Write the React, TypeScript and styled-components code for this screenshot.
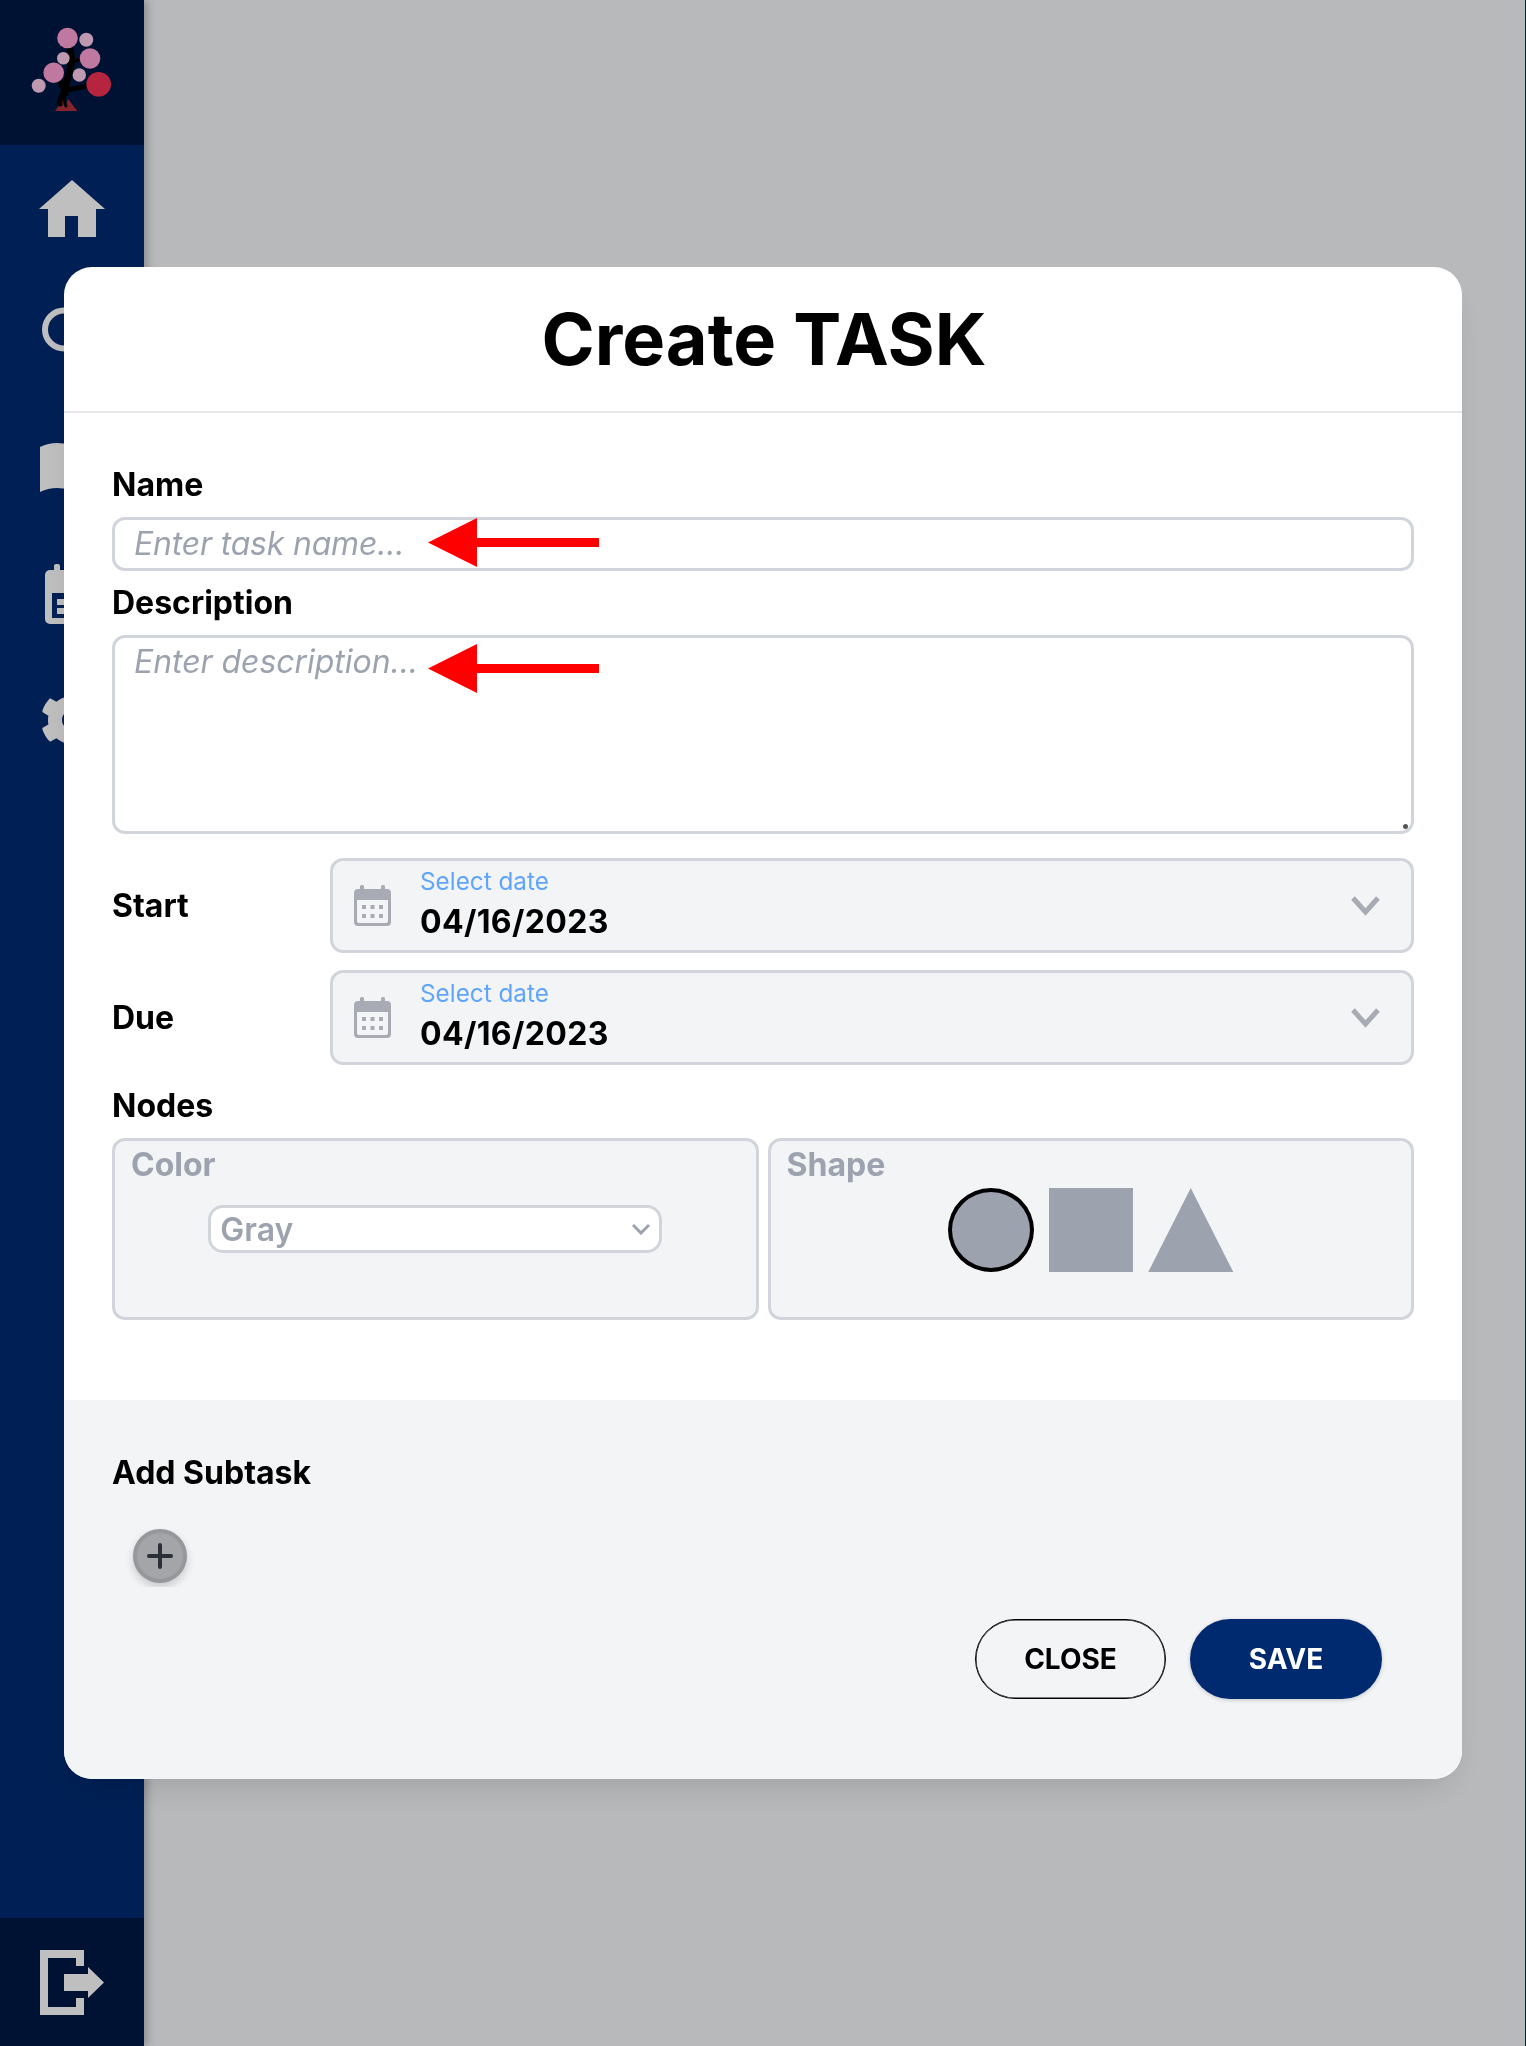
import styled, { createGlobalStyle } from 'styled-components'
import { FaCog } from 'react-icons/fa'

const GlobalStyle = createGlobalStyle`
  html, body {
    margin: 0;
    padding: 0;
    height: 100%;
    background: #f5f7f8;
    font-family: Inter, "Noto Sans", sans-serif;
  }
  * {
    box-sizing: border-box;
  }
`

const Page = styled.div`
  display: flex;
  height: 2046px;
  overflow: hidden;
  border-right: 1px solid #002a70;
`

const Sidebar = styled.aside`
  width: 144px;
  flex: none;
  display: flex;
  flex-direction: column;
  background: #002a70;
  box-shadow: 3px 0 8px rgba(0, 0, 0, 0.25);
`

const LogoCell = styled.div`
  height: 145px;
  background: #001944;
`

const Nav = styled.nav`
  flex: 1;
  display: flex;
  flex-direction: column;
  align-items: center;
  gap: 63.5px;
  padding-top: 31px;
  color: #fff;
`

const NavIcon = styled.svg`
  width: 64px;
  height: 64px;
  flex: none;
  overflow: visible;
  fill: currentColor;
`

const GearIcon = styled(FaCog)`
  flex: none;
  margin-top: 2px;
`

const LogoutCell = styled.div`
  height: 128px;
  display: flex;
  align-items: center;
  justify-content: center;
  background: #001944;
  color: #fff;
`

const Overlay = styled.div`
  position: fixed;
  inset: 0;
  display: flex;
  align-items: center;
  justify-content: center;
  background: rgba(0, 0, 0, 0.25);
`

const Modal = styled.div`
  width: 1398px;
  height: 1512px;
  display: flex;
  flex-direction: column;
  background: #fff;
  border-radius: 28px;
  overflow: hidden;
  box-shadow: 0 16px 40px -16px rgba(0, 0, 0, 0.18);
`

const ModalHeader = styled.header`
  height: 146px;
  flex: none;
  display: flex;
  align-items: center;
  justify-content: center;
  padding: 0 0 2px 2px;
  border-bottom: 2px solid #e5e7eb;
`

const Title = styled.h1`
  margin: 0;
  font-size: 72px;
  font-weight: 700;
  color: #000;
`

const ModalBody = styled.div`
  flex: 1;
  display: flex;
  flex-direction: column;
  padding: 48px 48px 0;
`

const Label = styled.label<{ $gap?: number }>`
  display: block;
  font-size: 32px;
  line-height: 48px;
  font-weight: 700;
  color: #000;
  margin-bottom: ${(p) => p.$gap ?? 8}px;
`

const FieldWrap = styled.div`
  position: relative;
`

const TextInput = styled.input`
  display: block;
  width: 100%;
  height: 54px;
  padding: 0 19px 1px;
  margin-bottom: 8px;
  border: 3px solid #d1d5db;
  border-radius: 13px;
  outline: none;
  font: italic 400 32px Inter, sans-serif;
  letter-spacing: -0.2px;
  &::placeholder {
    color: #9ca3af;
    opacity: 1;
  }
`

const TextArea = styled.textarea`
  display: block;
  width: 100%;
  height: 199px;
  padding: 0 19px;
  border: 3px solid #d1d5db;
  border-radius: 13px;
  outline: none;
  resize: none;
  font: italic 400 32px/48px Inter, sans-serif;
  letter-spacing: -0.05px;
  &::placeholder {
    color: #9ca3af;
    opacity: 1;
  }
`

const ResizeGrip = styled.span`
  position: absolute;
  right: 6px;
  bottom: 5px;
  width: 5px;
  height: 5px;
  border-radius: 50%;
  background: #555;
`

const RedArrow = styled.svg<{ $top: number }>`
  position: absolute;
  left: 316px;
  top: ${(p) => p.$top}px;
  width: 171px;
  height: 49px;
  fill: #ff0000;
`

const DateRows = styled.div`
  display: flex;
  flex-direction: column;
  gap: 17px;
  margin-top: 24px;
`

const DateRow = styled.div`
  display: grid;
  grid-template-columns: 218px 1fr;
  align-items: center;
`

const DateLabel = styled.span`
  font-size: 32px;
  font-weight: 700;
  color: #000;
`

const DateControl = styled.div`
  height: 95px;
  display: flex;
  align-items: center;
  gap: 29px;
  padding: 0 31px 0 21px;
  background: #f3f4f6;
  border: 3px solid #d1d5db;
  border-radius: 13px;
  color: #a8abb4;
`

const DateText = styled.div`
  flex: 1;
  display: flex;
  flex-direction: column;
  gap: 7px;
  margin-top: -3px;
`

const DateHint = styled.span`
  font-size: 24.3px;
  line-height: 28px;
  color: #60a5fa;
`

const DateValue = styled.span`
  font-size: 32px;
  line-height: 40px;
  font-weight: 700;
  letter-spacing: 0.35px;
  color: #000;
`

const DateChevron = styled.svg`
  width: 29px;
  height: 20px;
  flex: none;
  margin-top: 1px;
  fill: none;
  stroke: currentColor;
  stroke-width: 5;
`

const NodesHeading = styled(Label)`
  margin-top: 17px;
  margin-bottom: 8px;
`

const NodesGrid = styled.div`
  display: grid;
  grid-template-columns: 1fr 1fr;
  gap: 9px;
`

const NodeBox = styled.div`
  height: 182px;
  padding: 0 16px;
  background: #f3f4f6;
  border: 3px solid #d1d5db;
  border-radius: 13px;
`

const NodeTitle = styled.div`
  font-size: 32px;
  line-height: 48px;
  font-weight: 700;
  color: #9ca3af;
`

const SelectWrap = styled.div`
  position: relative;
  width: 454px;
  margin: 16px auto 0;
  color: #9ca3af;
`

const ColorSelect = styled.select`
  display: block;
  width: 100%;
  height: 48px;
  padding: 0 40px 0 9px;
  appearance: none;
  background: #fff;
  border: 3px solid #d1d5db;
  border-radius: 15px;
  outline: none;
  font: 600 32px Inter, sans-serif;
  color: #9ca3af;
`

const SelectChevron = styled.svg`
  position: absolute;
  right: 12px;
  top: 18px;
  width: 18px;
  height: 12px;
  fill: none;
  stroke: currentColor;
  stroke-width: 3;
`

const ShapeRow = styled.div`
  display: flex;
  justify-content: center;
  gap: 15px;
  margin-top: -1px;
`

const shapeWidths = { circle: 86, square: 84, triangle: 85 }

const Shape = styled.div<{ $kind: 'circle' | 'square' | 'triangle' }>`
  width: ${(p) => shapeWidths[p.$kind]}px;
  height: 84px;
  background: #9ca3af;
  ${(p) => p.$kind === 'circle' && 'border-radius: 50%; border: 4px solid #000;'}
  ${(p) => p.$kind === 'triangle' && 'clip-path: polygon(50% 0, 100% 100%, 0 100%);'}
`

const ModalFooter = styled.footer`
  height: 379px;
  flex: none;
  padding: 49px 80px 0 48px;
  background: #f3f4f6;
`

const SubtaskList = styled.div`
  height: 58px;
  margin-top: 32px;
  padding-left: 21px;
  overflow: hidden;
`

const AddButton = styled.button`
  width: 54px;
  height: 54px;
  display: flex;
  align-items: center;
  justify-content: center;
  padding: 0;
  background: #a3a5a9;
  border: 4px solid #95979b;
  border-radius: 50%;
  color: #2b3038;
  box-shadow: 0 4px 8px rgba(0, 0, 0, 0.18);
`

const Actions = styled.div`
  display: flex;
  justify-content: flex-end;
  gap: 24px;
  margin-top: 32px;
`

const ActionButton = styled.button<{ $primary?: boolean }>`
  width: ${(p) => (p.$primary ? 192 : 191)}px;
  height: 80px;
  border-radius: 40px;
  border: ${(p) => (p.$primary ? 'none' : '1px solid #000')};
  background: ${(p) => (p.$primary ? '#002a70' : 'transparent')};
  color: ${(p) => (p.$primary ? '#fff' : '#000')};
  font: 700 28px Inter, sans-serif;
  box-shadow: ${(p) => (p.$primary ? '0 1px 4px rgba(0, 0, 0, 0.2)' : 'inset 0 0 0 0.5px #000')};
`

const Logo = () => (
  <svg width="144" height="145" viewBox="0 0 144 145">
    <path d="M55 111 L63 100 L66 105 L68 99 L77.500 111 Z" fill="#b0303a" />
    <g fill="none" stroke="#000" strokeLinecap="round">
      <path d="M70 50 C75 66 66 78 65 90" strokeWidth="7" />
      <path d="M65 90 C62 96 59 97 60 104" strokeWidth="5" />
      <path d="M65 92 C64 98 64 102 66 106" strokeWidth="3" />
      <path d="M60 82 L66 94" strokeWidth="5" />
      <path d="M67 90 L87 86" strokeWidth="5" />
      <path d="M73 62 L80 59" strokeWidth="4" />
    </g>
    <g fill="#ffa0d4">
      <circle cx="67.500" cy="38" r="10.300" />
      <circle cx="90" cy="58.500" r="10.300" />
      <circle cx="53.700" cy="72.700" r="10.300" />
    </g>
    <g fill="#ffcdeb">
      <circle cx="86.300" cy="39.700" r="7" />
      <circle cx="63.300" cy="58.300" r="6.300" />
      <circle cx="79.300" cy="75" r="6.700" />
      <circle cx="38.700" cy="85.700" r="7" />
    </g>
    <circle cx="98.700" cy="84.300" r="12.300" fill="#f53055" />
  </svg>
)

const HomeIcon = () => (
  <NavIcon viewBox="0 0 64 64">
    <path d="M32 4 L65 33 H56 V61 H38 V40 H25 V61 H8 V33 H-1 Z" />
  </NavIcon>
)

const SearchIcon = () => (
  <NavIcon viewBox="0 0 64 64">
    <circle cx="24" cy="25.500" r="19" fill="none" stroke="currentColor" strokeWidth="6" />
    <path d="M38 39 L60 61" fill="none" stroke="currentColor" strokeWidth="8" strokeLinecap="round" />
  </NavIcon>
)

const BookIcon = () => (
  <NavIcon viewBox="0 0 64 64">
    <path d="M0 16 Q14 9 30 14 V59 Q14 54 0 61 Z" />
    <path d="M64 16 Q50 9 34 14 V59 Q50 54 64 61 Z" />
  </NavIcon>
)

const CalendarNavIcon = () => (
  <NavIcon viewBox="0 0 64 64">
    <rect x="14" y="5" width="6" height="10" rx="2" />
    <rect x="44" y="5" width="6" height="10" rx="2" />
    <rect x="5" y="11" width="54" height="54" rx="5" />
    <rect x="12" y="34" width="40" height="25" fill="#002a70" />
    <rect x="17" y="40" width="7" height="6" />
    <rect x="17" y="49" width="7" height="6" />
    <rect x="29" y="40" width="7" height="6" />
    <rect x="29" y="49" width="7" height="6" />
    <rect x="41" y="40" width="7" height="6" />
  </NavIcon>
)

const LogoutIcon = () => (
  <svg width="64" height="65" viewBox="0 0 64 65" fill="currentColor">
    <path d="M0 0 H44 V16 H36 V8 H8 V57 H36 V48 H44 V65 H0 Z" />
    <path d="M24 24 H48 V17 L64 32.500 L48 48 V41 H24 Z" />
  </svg>
)

const DateIcon = () => (
  <svg width="37" height="41" viewBox="0 0 37 41" fill="currentColor" style={{ flex: 'none' }}>
    <rect x="6" y="0" width="4" height="8" rx="1.500" />
    <rect x="27" y="0" width="4" height="8" rx="1.500" />
    <path d="M4 4 H33 Q37 4 37 8 V37 Q37 41 33 41 H4 Q0 41 0 37 V8 Q0 4 4 4 Z M3 15 V36 Q3 38 5 38 H32 Q34 38 34 36 V15 Z" fillRule="evenodd" />
    <g>
      <rect x="8" y="20" width="4" height="4" />
      <rect x="16.500" y="20" width="4" height="4" />
      <rect x="25" y="20" width="4" height="4" />
      <rect x="8" y="29" width="4" height="4" />
      <rect x="16.500" y="29" width="4" height="4" />
      <rect x="25" y="29" width="4" height="4" />
    </g>
  </svg>
)

const ArrowShape = () => <path d="M0 24.500 L49 0 V20 H171 V29 H49 V49 Z" />

const dates = ['Start', 'Due']

const App = () => {
  return (
    <>
      <GlobalStyle />
      <Page>
        <Sidebar>
          <LogoCell>
            <Logo />
          </LogoCell>
          <Nav>
            <HomeIcon />
            <SearchIcon />
            <BookIcon />
            <CalendarNavIcon />
            <GearIcon size={64} />
          </Nav>
          <LogoutCell>
            <LogoutIcon />
          </LogoutCell>
        </Sidebar>
      </Page>
      <Overlay>
        <Modal>
          <ModalHeader>
            <Title>Create TASK</Title>
          </ModalHeader>
          <ModalBody>
            <Label>Name</Label>
            <FieldWrap>
              <TextInput placeholder="Enter task name..." />
              <RedArrow $top={1} viewBox="0 0 171 49">
                <ArrowShape />
              </RedArrow>
            </FieldWrap>
            <Label>Description</Label>
            <FieldWrap>
              <TextArea placeholder="Enter description..." />
              <ResizeGrip />
              <RedArrow $top={9} viewBox="0 0 171 49">
                <ArrowShape />
              </RedArrow>
            </FieldWrap>
            <DateRows>
              {dates.map((label) => (
                <DateRow key={label}>
                  <DateLabel>{label}</DateLabel>
                  <DateControl>
                    <DateIcon />
                    <DateText>
                      <DateHint>Select date</DateHint>
                      <DateValue>04/16/2023</DateValue>
                    </DateText>
                    <DateChevron viewBox="0 0 29 20">
                      <path d="M2 2 L14.500 16 L27 2" />
                    </DateChevron>
                  </DateControl>
                </DateRow>
              ))}
            </DateRows>
            <NodesHeading>Nodes</NodesHeading>
            <NodesGrid>
              <NodeBox>
                <NodeTitle>Color</NodeTitle>
                <SelectWrap>
                  <ColorSelect defaultValue="Gray">
                    <option>Gray</option>
                  </ColorSelect>
                  <SelectChevron viewBox="0 0 18 12">
                    <path d="M1 2 L9 10 L17 2" />
                  </SelectChevron>
                </SelectWrap>
              </NodeBox>
              <NodeBox>
                <NodeTitle>Shape</NodeTitle>
                <ShapeRow>
                  <Shape $kind="circle" />
                  <Shape $kind="square" />
                  <Shape $kind="triangle" />
                </ShapeRow>
              </NodeBox>
            </NodesGrid>
          </ModalBody>
          <ModalFooter>
            <Label $gap={0}>Add Subtask</Label>
            <SubtaskList>
              <AddButton>
                <svg width="26" height="26" viewBox="0 0 26 26" stroke="currentColor" strokeWidth="4" strokeLinecap="round">
                  <path d="M13 2 V24 M2 13 H24" />
                </svg>
              </AddButton>
            </SubtaskList>
            <Actions>
              <ActionButton>CLOSE</ActionButton>
              <ActionButton $primary>SAVE</ActionButton>
            </Actions>
          </ModalFooter>
        </Modal>
      </Overlay>
    </>
  )
}

export default App
